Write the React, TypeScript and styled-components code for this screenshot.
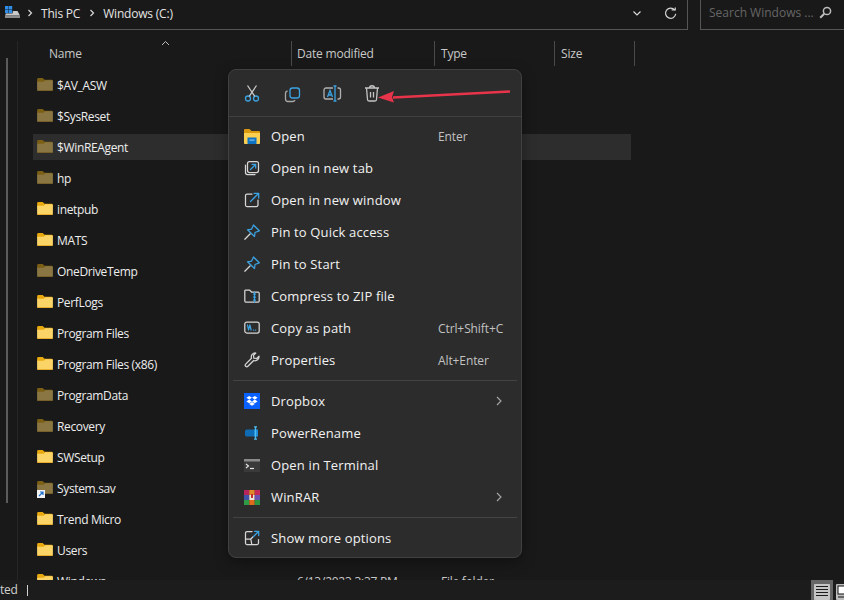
import React from "react";
import styled, { createGlobalStyle } from "styled-components";

const Global = createGlobalStyle`
  html, body { margin: 0; padding: 0; background: #191919; }
  * { box-sizing: border-box; }
`;

const Page = styled.div`
  position: relative;
  width: 844px;
  height: 600px;
  overflow: hidden;
  background: #191919;
  color: #f0f0f0;
  font-family: "Open Sans", "Noto Sans", sans-serif;
  display: flex;
  flex-direction: column;
`;

const TopBar = styled.div`
  display: flex;
  height: 30px;
  flex: none;
`;
const AddressBar = styled.div`
  width: 688px;
  border-bottom: 1px solid #555;
  border-right: 1px solid #555;
  display: flex;
  align-items: center;
  padding: 0 0 3px 5px;
  font-size: 12px;
  color: #e4e4e4;
`;
const DriveIcon = styled.svg`
  flex: none;
  margin: -2px -2px 0 0;
`;
const Crumb = styled.span`
  letter-spacing: -0.2px;
`;
const CrumbSep = styled.svg`
  width: 6px;
  height: 8px;
  margin: 0 8px 0 9px;
  flex: none;
`;
const AddressTools = styled.div`
  margin-left: auto;
  display: flex;
  align-items: center;
  gap: 23px;
  padding-right: 10px;
`;
const SearchBox = styled.div`
  margin-left: 12px;
  flex: 1;
  border-left: 1px solid #555;
  border-bottom: 1px solid #555;
  display: flex;
  align-items: center;
  padding: 0 12px 4px 8px;
  font-size: 12px;
  color: #666;
  justify-content: space-between;
  white-space: nowrap;
`;

const Body = styled.div`
  flex: 1;
  display: flex;
  min-height: 0;
`;
const NavPane = styled.div`
  width: 18px;
  flex: none;
  border-right: 1px solid #262626;
  padding: 17px 0 0 6px;
  margin-top: 11px;
`;
const NavThumb = styled.div`
  width: 2px;
  height: 445px;
  background: #5c5c5c;
`;
const Files = styled.div`
  flex: 1;
  min-width: 0;
  padding-top: 11px;
  overflow: hidden;
`;
const HeaderRow = styled.div`
  position: relative;
  display: grid;
  grid-template-columns: 274px 143px 120px 80px;
  height: 25px;
  font-size: 12px;
  color: #c8c8c8;
  letter-spacing: -0.2px;
`;
const HeaderCell = styled.div<{ $pad: number }>`
  height: 25px;
  border-right: 1px solid #4a4a4a;
  padding-left: ${(p) => p.$pad}px;
  padding-bottom: 1px;
  display: flex;
  align-items: center;
`;
const SortMark = styled.svg`
  position: absolute;
  left: 143px;
  top: -1px;
`;
const List = styled.div`
  padding: 6px 0 0 15px;
`;
const Row = styled.div<{ $selected?: boolean }>`
  display: flex;
  align-items: center;
  height: 26px;
  margin: 0 0 5px 0;
  width: 598px;
  padding-left: 4px;
  background: ${(p) => (p.$selected ? "#2d2d2d" : "transparent")};
  font-size: 12px;
  color: #ededed;
  letter-spacing: -0.35px;
  white-space: nowrap;
`;
const RowName = styled.span`
  margin-left: 4px;
  width: 240px;
`;
const RowDate = styled.span`
  width: 144px;
  color: #c8c8c8;
  letter-spacing: -0.25px;
`;
const RowType = styled.span`
  color: #c8c8c8;
  letter-spacing: -0.25px;
`;
const FolderHolder = styled.span`
  position: relative;
  width: 16px;
  height: 13px;
  flex: none;
  display: block;
  margin-top: -2px;
`;
const ShortcutBadge = styled.svg`
  position: absolute;
  left: 0;
  bottom: -4px;
`;

const StatusBar = styled.div`
  height: 20px;
  flex: none;
  background: #1c1c1c;
  display: flex;
  align-items: center;
  font-size: 12px;
  color: #cfcfcf;
  position: relative;
  z-index: 1;
`;
const StatusText = styled.span`
  letter-spacing: -0.2px;
  width: 27px;
  padding-bottom: 1px;
`;
const StatusDivider = styled.span`
  width: 1px;
  height: 11px;
  background: #d0d0d0;
`;
const ViewButtons = styled.div`
  margin-left: auto;
  display: flex;
  align-items: flex-start;
  gap: 3px;
  margin-right: -14px;
`;
const ViewButton = styled.div<{ $active?: boolean }>`
  width: 22px;
  height: 20px;
  padding-top: 4px;
  overflow: hidden;
  background: ${(p) => (p.$active ? "#666" : "transparent")};
  display: flex;
  align-items: flex-start;
  justify-content: ${(p) => (p.$active ? "center" : "flex-start")};
`;

const Menu = styled.div`
  position: absolute;
  left: 228px;
  top: 69px;
  width: 294px;
  height: 489px;
  background: #2c2c2c;
  border: 1px solid #414141;
  border-radius: 8px;
  box-shadow: 0 4px 14px rgba(0, 0, 0, 0.35);
  z-index: 2;
  padding: 0 3px;
`;
const MenuToolbar = styled.div`
  height: 47px;
  margin: 0 -3px 3px;
  display: flex;
  align-items: center;
  padding: 0 0 1px 13px;
  gap: 20px;
  border-bottom: 1px solid #404040;
`;
const ToolIcon = styled.svg`
  width: 20px;
  height: 20px;
  flex: none;
`;
const MenuRow = styled.div`
  height: 32px;
  display: flex;
  align-items: center;
  padding-left: 12px;
  font-size: 13px;
  color: #f2f2f2;
  white-space: nowrap;
`;
const MenuIcon = styled.span`
  width: 16px;
  height: 16px;
  flex: none;
  display: flex;
  align-items: center;
  justify-content: center;
  margin-right: 11px;
`;
const MenuLabel = styled.span`
  width: 167px;
  letter-spacing: 0.15px;
`;
const Shortcut = styled.span`
  font-size: 12px;
  color: #c2c2c2;
  letter-spacing: -0.1px;
`;
const Chevron = styled.svg`
  margin-left: 58px;
`;
const MenuSep = styled.div`
  height: 1px;
  background: #434343;
  margin: 4px 1px 4px;
`;
const Arrow = styled.svg`
  position: absolute;
  left: 377px;
  top: 85px;
  z-index: 3;
`;

const BLUE = "#3ba3e2";
const WHITE = "#d6d6d6";

const Folder = ({ dim }: { dim?: boolean }) => (
  <svg width="16" height="13" viewBox="0 0 17 14">
    <path d="M0 1.500A1.500 1.500 0 0 1 1.500 0H6l2 2h7.500A1.500 1.500 0 0 1 17 3.500V5H0z" fill={dim ? "#7a5f14" : "#e8a90f"} />
    <path d="M0 4h7l2-1.500h6.500A1.500 1.500 0 0 1 17 4v8.500A1.500 1.500 0 0 1 15.500 14h-14A1.500 1.500 0 0 1 0 12.500z" fill={dim ? "#8a7642" : "#fbd468"} />
    <rect y="12.800" width="17" height="1.200" rx=".6" fill={dim ? "#77602a" : "#e6ae2c"} />
  </svg>
);

const names: [string, boolean?, boolean?, boolean?][] = [
  ["$AV_ASW", true],
  ["$SysReset", true],
  ["$WinREAgent", true, true],
  ["hp", true],
  ["inetpub"],
  ["MATS"],
  ["OneDriveTemp", true],
  ["PerfLogs"],
  ["Program Files"],
  ["Program Files (x86)"],
  ["ProgramData", true],
  ["Recovery", true],
  ["SWSetup"],
  ["System.sav", true, false, true],
  ["Trend Micro"],
  ["Users"],
];

const Stroke = ({ children }: { children: React.ReactNode }) => (
  <svg width="16" height="16" viewBox="0 0 16 16" fill="none" strokeWidth="1.250" strokeLinecap="round" strokeLinejoin="round">
    {children}
  </svg>
);

const icons: Record<string, React.ReactNode> = {
  open: (
    <svg width="16" height="15" viewBox="0 0 16 15">
      <path d="M0 1a1 1 0 0 1 1-1h4.500l2 2H15a1 1 0 0 1 1 1v2H0z" fill="#d99a10" />
      <path d="M0 4h16v10a1 1 0 0 1-1 1H1a1 1 0 0 1-1-1z" fill="#fbd050" />
      <rect x="3.500" y="8.500" width="9" height="6.500" fill="#0f73c4" />
      <rect x="5.500" y="10.500" width="5" height="1.200" fill="#7ec4f2" />
    </svg>
  ),
  tab: (
    <Stroke>
      <rect x="3.500" y="1.500" width="11" height="11" rx="2" stroke={WHITE} />
      <path d="M1.500 5v7.500a2 2 0 0 0 2 2H11" stroke={WHITE} />
      <path d="M6.500 9.500l5-5M8 4.300h3.700V8" stroke={BLUE} />
    </Stroke>
  ),
  window: (
    <Stroke>
      <path d="M8 2H3a1.500 1.500 0 0 0-1.500 1.500V13A1.500 1.500 0 0 0 3 14.500h9.500A1.500 1.500 0 0 0 14 13V8" stroke={WHITE} />
      <path d="M6.500 9.500L14.500 1.500M10 1.300h4.700V6" stroke={BLUE} />
    </Stroke>
  ),
  pin: (
    <Stroke>
      <path d="M9.500 1L15.300 6.800 11 8.500 10.500 12.500 3.500 5.800 7.500 5.200z" stroke={BLUE} />
      <path d="M6 10L.8 15.200" stroke={WHITE} />
    </Stroke>
  ),
  zip: (
    <Stroke>
      <path d="M.8 3a1 1 0 0 1 1-1h3.700l2 2h6.700a1.300 1.300 0 0 1 1 1.300v7.700a1 1 0 0 1-1 1H1.800a1 1 0 0 1-1-1z" stroke={WHITE} />
      <path d="M10.500 4v10M9.500 6h2M9.500 9h2M9.500 12h2" stroke={BLUE} />
    </Stroke>
  ),
  path: (
    <Stroke>
      <rect x=".8" y="2" width="14.400" height="11" rx="2" stroke={WHITE} />
      <path d="M3.500 5l1 5 1.400-5 1.200 5M9.500 10h.2M11.500 10h.2" stroke={BLUE} />
    </Stroke>
  ),
  wrench: (
    <Stroke>
      <path
        d="M15 4.200a4 4 0 0 1-5.300 4.300L3.900 14.300a1.500 1.500 0 0 1-2.200-2.200L7.500 6.300A4 4 0 0 1 11.800 1L9.500 3.300l.3 2.900 2.900.3z"
        stroke={WHITE}
      />
    </Stroke>
  ),
  dropbox: (
    <svg width="16" height="16" viewBox="0 0 16 16">
      <rect width="16" height="16" fill="#0a61fe" />
      <path d="M5.200 3L8 4.800 5.200 6.600 2.400 4.800zM10.800 3l2.800 1.800-2.800 1.800L8 4.800zM2.400 8.400l2.800-1.800L8 8.400 5.200 10.200zM13.600 8.400l-2.800-1.800L8 8.400l2.800 1.800zM5.200 10.900L8 9.100l2.800 1.800L8 12.700z" fill="#fff" />
    </svg>
  ),
  rename: (
    <svg width="16" height="14" viewBox="0 0 16 14">
      <rect x="1" y="3.500" width="13" height="7" rx="1.500" fill="#0f6cb4" />
      <rect x="10" y="3.500" width="4" height="7" fill="#1f8ad6" />
      <path d="M10 .8h3M11.500.8v12.400M10 13.200h3" stroke="#4dbbf0" strokeWidth="1.300" fill="none" />
    </svg>
  ),
  terminal: (
    <svg width="16" height="13" viewBox="0 0 16 13">
      <rect width="16" height="13" fill="#3a3a3a" />
      <rect width="16" height="2.500" fill="#8a8a8a" />
      <path d="M2 5l2.500 2L2 9" stroke="#e6e6e6" strokeWidth="1.100" fill="none" />
      <path d="M6 9.500h4" stroke="#e6e6e6" strokeWidth="1.200" />
    </svg>
  ),
  rar: (
    <svg width="16" height="15" viewBox="0 0 16 15">
      <rect x="0" width="5.300" height="5" fill="#b8245c" />
      <rect x="5.300" width="5.400" height="5" fill="#e28a2a" />
      <rect x="10.700" width="5.300" height="5" fill="#c6285a" />
      <rect x="0" y="5" width="5.300" height="5" fill="#3f52a8" />
      <rect x="5.300" y="5" width="5.400" height="5" fill="#f0e6d8" />
      <rect x="10.700" y="5" width="5.300" height="5" fill="#6a52b0" />
      <rect x="0" y="10" width="5.300" height="5" fill="#2e9a46" />
      <rect x="5.300" y="10" width="5.400" height="5" fill="#de6a1e" />
      <rect x="10.700" y="10" width="5.300" height="5" fill="#2a9442" />
      <path d="M7 4h2v4H7z" fill="#c03030" />
    </svg>
  ),
  more: (
    <Stroke>
      <path d="M8 1.500H3A1.500 1.500 0 0 0 1.500 3v10A1.500 1.500 0 0 0 3 14.500h10a1.500 1.500 0 0 0 1.500-1.500V9.500" stroke={WHITE} />
      <path d="M1.500 9h5.300l1 5.500M6.800 9l2-2" stroke={WHITE} />
      <path d="M9.500 6.500l5-5M10.500 1.300h4.200v4.200" stroke={BLUE} />
    </Stroke>
  ),
};

type Item = { icon: string; label: string; shortcut?: string; sub?: boolean };
const group1: Item[] = [
  { icon: "open", label: "Open", shortcut: "Enter" },
  { icon: "tab", label: "Open in new tab" },
  { icon: "window", label: "Open in new window" },
  { icon: "pin", label: "Pin to Quick access" },
  { icon: "pin", label: "Pin to Start" },
  { icon: "zip", label: "Compress to ZIP file" },
  { icon: "path", label: "Copy as path", shortcut: "Ctrl+Shift+C" },
  { icon: "wrench", label: "Properties", shortcut: "Alt+Enter" },
];
const group2: Item[] = [
  { icon: "dropbox", label: "Dropbox", sub: true },
  { icon: "rename", label: "PowerRename" },
  { icon: "terminal", label: "Open in Terminal" },
  { icon: "rar", label: "WinRAR", sub: true },
];

const MenuItem = ({ item }: { item: Item }) => (
  <MenuRow>
    <MenuIcon>{icons[item.icon]}</MenuIcon>
    <MenuLabel>{item.label}</MenuLabel>
    {item.shortcut && <Shortcut>{item.shortcut}</Shortcut>}
    {item.sub && (
      <Chevron width="6" height="10" viewBox="0 0 6 10" fill="none">
        <path d="M1 1l4 4-4 4" stroke="#a8a8a8" strokeWidth="1.100" />
      </Chevron>
    )}
  </MenuRow>
);

const Sep = () => (
  <CrumbSep viewBox="0 0 6 8" fill="none">
    <path d="M1.500 1l3 3-3 3" stroke="#d8d8d8" strokeWidth="1.200" />
  </CrumbSep>
);

export default function App() {
  return (
    <Page>
      <Global />
      <TopBar>
        <AddressBar>
          <DriveIcon width="15" height="12" viewBox="0 0 15 12">
            <rect x="0" y="0" width="3.400" height="3.400" fill="#2f8fe8" />
            <rect x="3.800" y="0" width="3.400" height="3.400" fill="#2f8fe8" />
            <rect x="0" y="3.800" width="3.400" height="3.400" fill="#2f8fe8" />
            <rect x="3.800" y="3.800" width="3.400" height="3.400" fill="#2f8fe8" />
            <path d="M8 5h4.500L15 9.500H0L1 7.500H7.500z" fill="#c9c9c9" />
            <rect x="0" y="9.500" width="15" height="2.500" fill="#8c8c8c" />
          </DriveIcon>
          <Sep />
          <Crumb>This PC</Crumb>
          <Sep />
          <Crumb>Windows (C:)</Crumb>
          <AddressTools>
            <svg width="8" height="5" viewBox="0 0 8 5" fill="none">
              <path d="M.5.500l3.500 3.500L7.500.500" stroke="#ddd" strokeWidth="1.100" />
            </svg>
            <svg width="13" height="13" viewBox="0 0 14 14" fill="none">
              <path d="M11.500 3.300A5.500 5.500 0 1 0 12.600 7.500" stroke="#d4d4d4" strokeWidth="1.300" />
              <path d="M8.200 3.200h3.900V0.500" stroke="#d4d4d4" strokeWidth="1.300" />
            </svg>
          </AddressTools>
        </AddressBar>
        <SearchBox>
          Search Windows ...
          <svg width="13" height="13" viewBox="0 0 13 13" fill="none">
            <circle cx="8" cy="5" r="3.600" stroke="#bdbdbd" strokeWidth="1.500" />
            <path d="M5.200 7.800L1.200 11.800" stroke="#bdbdbd" strokeWidth="2" />
          </svg>
        </SearchBox>
      </TopBar>
      <Body>
        <NavPane>
          <NavThumb />
        </NavPane>
        <Files>
          <HeaderRow>
            <HeaderCell $pad={31}>Name</HeaderCell>
            <HeaderCell $pad={5}>Date modified</HeaderCell>
            <HeaderCell $pad={6}>Type</HeaderCell>
            <HeaderCell $pad={6}>Size</HeaderCell>
            <SortMark width="9" height="6" viewBox="0 0 9 6" fill="none">
              <path d="M1 5l3.500-3.500L8 5" stroke="#bdbdbd" strokeWidth="1" />
            </SortMark>
          </HeaderRow>
          <List>
            {names.map(([name, dim, selected, badge]) => (
              <Row key={name} $selected={selected}>
                <FolderHolder>
                  <Folder dim={dim} />
                  {badge && (
                    <ShortcutBadge width="8" height="8" viewBox="0 0 8 8">
                      <rect width="8" height="8" fill="#f2f2f2" />
                      <path d="M2 6l3.500-3.500M3 2h3v3" stroke="#1a6fd0" strokeWidth="1.200" fill="none" />
                    </ShortcutBadge>
                  )}
                </FolderHolder>
                <RowName>{name}</RowName>
              </Row>
            ))}
            <Row>
              <FolderHolder>
                <Folder />
              </FolderHolder>
              <RowName>Windows</RowName>
              <RowDate>6/13/2023 3:37 PM</RowDate>
              <RowType>File folder</RowType>
            </Row>
          </List>
        </Files>
      </Body>
      <StatusBar>
        <StatusText>ted</StatusText>
        <StatusDivider />
        <ViewButtons>
          <ViewButton $active>
            <svg width="16" height="16" viewBox="0 0 16 16">
              <rect width="16" height="16" rx="1" fill="#c4c4c4" />
              <path d="M2 2.500h12M2 5.500h12M2 8.500h12M2 11.500h12" stroke="#1b1b1b" strokeWidth="1.100" />
            </svg>
          </ViewButton>
          <ViewButton>
            <svg width="16" height="16" viewBox="0 0 16 16">
              <rect width="16" height="16" rx="1" fill="#bdbdbd" />
              <rect x="2" y="2" width="12" height="8" fill="#fff" stroke="#111" />
              <path d="M2 13h12" stroke="#111" />
            </svg>
          </ViewButton>
        </ViewButtons>
      </StatusBar>

      <Menu>
        <MenuToolbar>
          <ToolIcon viewBox="0 0 20 20" fill="none" strokeWidth="1.300">
            <circle cx="6" cy="15.500" r="2.500" stroke={BLUE} />
            <circle cx="14" cy="15.500" r="2.500" stroke={BLUE} />
            <path d="M7.200 13.300L14.500 2.500M12.800 13.300L5.500 2.500" stroke="#c8c8c8" />
          </ToolIcon>
          <ToolIcon viewBox="0 0 20 20" fill="none" strokeWidth="1.300">
            <rect x="8" y="5" width="9.500" height="10" rx="2.500" stroke={BLUE} />
            <path d="M5.500 8A2.500 2.500 0 0 0 3.500 10.500V16A2.500 2.500 0 0 0 6 18.500H10.500A2.500 2.500 0 0 0 13 17" stroke="#a8a8a8" />
          </ToolIcon>
          <ToolIcon viewBox="0 0 20 20" fill="none" strokeWidth="1.300">
            <path d="M11 5H4A2 2 0 0 0 2 7v7a2 2 0 0 0 2 2h7M15.500 5h1a2 2 0 0 1 2 2v7a2 2 0 0 1-2 2h-1" stroke="#b0b0b0" />
            <path d="M11.500 3h3M13 3v15M11.500 18h3" stroke={BLUE} />
            <path d="M5.500 14L8 7.500 10.500 14M6.500 12h3" stroke={BLUE} />
          </ToolIcon>
          <ToolIcon viewBox="0 0 20 20" fill="none" strokeWidth="1.300">
            <path d="M3 5h14M7.500 5c0-3 5-3 5 0M4.500 5l1 11.500a1.500 1.500 0 0 0 1.500 1.500h6a1.500 1.500 0 0 0 1.500-1.500L15.500 5" stroke="#c4c4c4" />
            <path d="M8.500 9v5.500M11.500 9v5.500" stroke="#c4c4c4" />
          </ToolIcon>
        </MenuToolbar>
        {group1.map((i) => (
          <MenuItem key={i.label} item={i} />
        ))}
        <MenuSep />
        {group2.map((i) => (
          <MenuItem key={i.label} item={i} />
        ))}
        <MenuSep />
        <MenuItem item={{ icon: "more", label: "Show more options" }} />
      </Menu>
      <Arrow width="134" height="20" viewBox="0 0 134 20">
        <path d="M133 6.500 L16 12.500" stroke="#e8344a" strokeWidth="2.400" fill="none" />
        <path d="M1 12.500 L17 6 L15 12 L17 17.500 Z" fill="#e8344a" />
      </Arrow>
    </Page>
  );
}
